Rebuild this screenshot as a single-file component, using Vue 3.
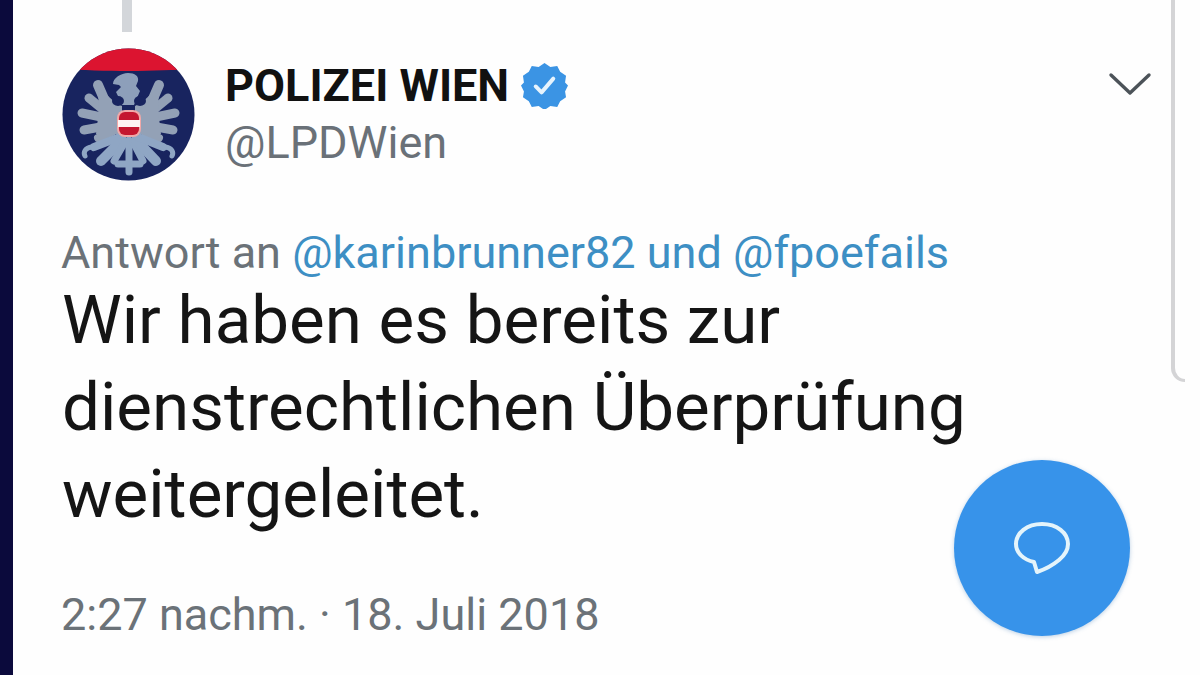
<template>
  <div class="page">
    <div class="edge"></div>
    <main class="tweet">
      <div class="thread"></div>
      <header class="head">
        <svg class="avatar" viewBox="0 0 134 134">
          <defs>
            <clipPath id="round"><circle cx="66.5" cy="66.5" r="66" /></clipPath>
          </defs>
          <g clip-path="url(#round)">
            <rect width="134" height="134" fill="#18245f" />
            <path d="M0 0h134v21c-20 1-44 2-67 2s-47-1-67-2z" fill="#dc1430" />
            <g fill="none" stroke="#93a1b6" stroke-linecap="round">
              <path d="M46 60 36 37" stroke-width="10" />
              <path d="M44 64 27 50" stroke-width="9" />
              <path d="M44 70 20 65" stroke-width="9" />
              <path d="M44 78 22 82" stroke-width="9" />
              <path d="M50 84 36 90" stroke-width="8" />
              <path d="M87 60l10-23" stroke-width="10" />
              <path d="M89 64l17-14" stroke-width="9" />
              <path d="M89 70l24-5" stroke-width="9" />
              <path d="M89 78l22 4" stroke-width="9" />
              <path d="M83 84l14 6" stroke-width="8" />
            </g>
            <path d="M36 40c10 6 14 14 24 18v28H34l3-24z" fill="#93a1b6" />
            <path d="M97 40c-10 6-14 14-24 18v28h26l-3-24z" fill="#93a1b6" />
            <path d="M66 25c7 0 11 3 10 8l-2 5 4 5-3 7-3 7H60l-3-7-3-6 5-5-2-2-6-1c0-6 8-11 15-11z" fill="#8d9fba" />
            <ellipse cx="56" cy="53" rx="6" ry="5" fill="#18245f" />
            <ellipse cx="78" cy="53" rx="6" ry="5" fill="#18245f" />
            <g fill="none" stroke="#8fa6c4" stroke-linecap="round">
              <path d="M58 89 32 99" stroke-width="8" />
              <path d="M60 92 39 113" stroke-width="10" />
              <path d="M63 94 52 113" stroke-width="7" />
              <path d="M67 92v32" stroke-width="7" />
              <path d="M71 94l10 19" stroke-width="7" />
              <path d="M74 92l20 21" stroke-width="10" />
              <path d="M76 89l25 10" stroke-width="8" />
              <path d="M30 99c-7 1-9 5-7 9" stroke-width="5" />
              <path d="M103 99c7 1 9 5 7 9" stroke-width="5" />
              <path d="M56 116h22" stroke-width="7" />
            </g>
            <rect x="55" y="62" width="24" height="27" rx="8" fill="#f0a8a8" />
            <rect x="57" y="64" width="20" height="23" rx="6" fill="#c4162f" />
            <rect x="56" y="72" width="22" height="7" fill="#fdf3f2" />
          </g>
        </svg>
        <div class="names">
          <div class="name-row">
            <span class="name">POLIZEI WIEN</span>
            <svg class="badge" viewBox="0 0 48 48">
              <path d="M24 1l6 4 7-1 3 6 6 4-1 7 3 3-3 6 1 6-6 4-3 6-7-1-6 4-6-4-7 1-3-6-6-4 1-6-3-6 3-3-1-7 6-4 3-6 7 1z" fill="#3b94e4" />
              <path d="M15 25l6 6 12-14" fill="none" stroke="#e6f3fd" stroke-width="4" stroke-linecap="round" stroke-linejoin="round" />
            </svg>
          </div>
          <div class="handle">@LPDWien</div>
        </div>
        <svg class="chevron" viewBox="0 0 44 26">
          <path d="M3 4l19 18L41 4" fill="none" stroke="#4c5359" stroke-width="3.4" stroke-linecap="round" stroke-linejoin="round" />
        </svg>
      </header>
      <p class="reply">Antwort an <span class="link">@karinbrunner82</span> <span class="link">und</span> <span class="link">@fpoefails</span></p>
      <p class="body">Wir haben es bereits zur<br />dienstrechtlichen Überprüfung<br />weitergeleitet.</p>
      <p class="meta">2:27 nachm. · 18. Juli 2018</p>
    </main>
    <div class="rail"></div>
    <button class="fab">
      <svg viewBox="0 0 58 54">
        <path d="M29 3C14 3 3 12 3 23c0 9 8 16 18 18l3 10c9-3 16-7 22-12 6-5 9-10 9-16C55 12 44 3 29 3z" fill="none" stroke="#e4f4fb" stroke-width="4" stroke-linejoin="round" />
      </svg>
    </button>
  </div>
</template>

<script setup>
</script>

<style>
html, body {
  margin: 0;
  background: #fff;
}
</style>

<style scoped>
.page {
  position: relative;
  display: flex;
  width: 1200px;
  height: 675px;
  overflow: hidden;
  background: #fefefe;
  font-family: Roboto, "Liberation Sans", sans-serif;
  color: #14171a;
}

.edge {
  flex: 0 0 13px;
  background: #0b0a3c;
}

.tweet {
  flex: 1;
  padding: 0 48px 0 49px;
}

.thread {
  width: 10px;
  height: 32px;
  margin-left: 60px;
  background: #d3d6da;
}

.head {
  display: flex;
  align-items: flex-start;
  margin-top: 16px;
}

.avatar {
  flex: none;
  width: 134px;
  height: 134px;
}

.names {
  flex: 1;
  margin-left: 29px;
  padding-top: 13px;
}

.name-row {
  display: flex;
  align-items: center;
  height: 48px;
}

.name {
  font-size: 45px;
  font-weight: 700;
  color: #111;
}

.badge {
  width: 47px;
  height: 47px;
  margin-left: 12px;
}

.handle {
  margin-top: 8px;
  font-size: 45px;
  line-height: 52px;
  color: #6a7178;
}

.chevron {
  flex: none;
  width: 44px;
  height: 26px;
  margin: 23px 0 0 0;
}

.reply {
  margin: 45px 0 0 -1px;
  font-size: 45px;
  line-height: 52px;
  color: #6b7278;
}

.link {
  color: #3d8fc4;
}

.body {
  margin: -2px 0 0 0;
  font-size: 67.3px;
  line-height: 87px;
  color: #151515;
}

.meta {
  margin: 51px 0 0 -1px;
  font-size: 45px;
  line-height: 52px;
  color: #6b7278;
}

.rail {
  position: absolute;
  top: -30px;
  left: 1171px;
  width: 14px;
  height: 412px;
  border-left: 4px solid #d4d4d6;
  border-bottom: 3px solid #d4d4d6;
  border-bottom-left-radius: 14px;
  box-sizing: border-box;
}

.fab {
  position: absolute;
  left: 954px;
  top: 460px;
  display: flex;
  align-items: center;
  justify-content: center;
  width: 176px;
  height: 176px;
  padding: 0;
  border: none;
  border-radius: 50%;
  background: #3793ea;
  box-shadow: 0 1px 4px rgba(60, 120, 180, 0.35);
}

.fab svg {
  width: 58px;
  height: 54px;
}
</style>
